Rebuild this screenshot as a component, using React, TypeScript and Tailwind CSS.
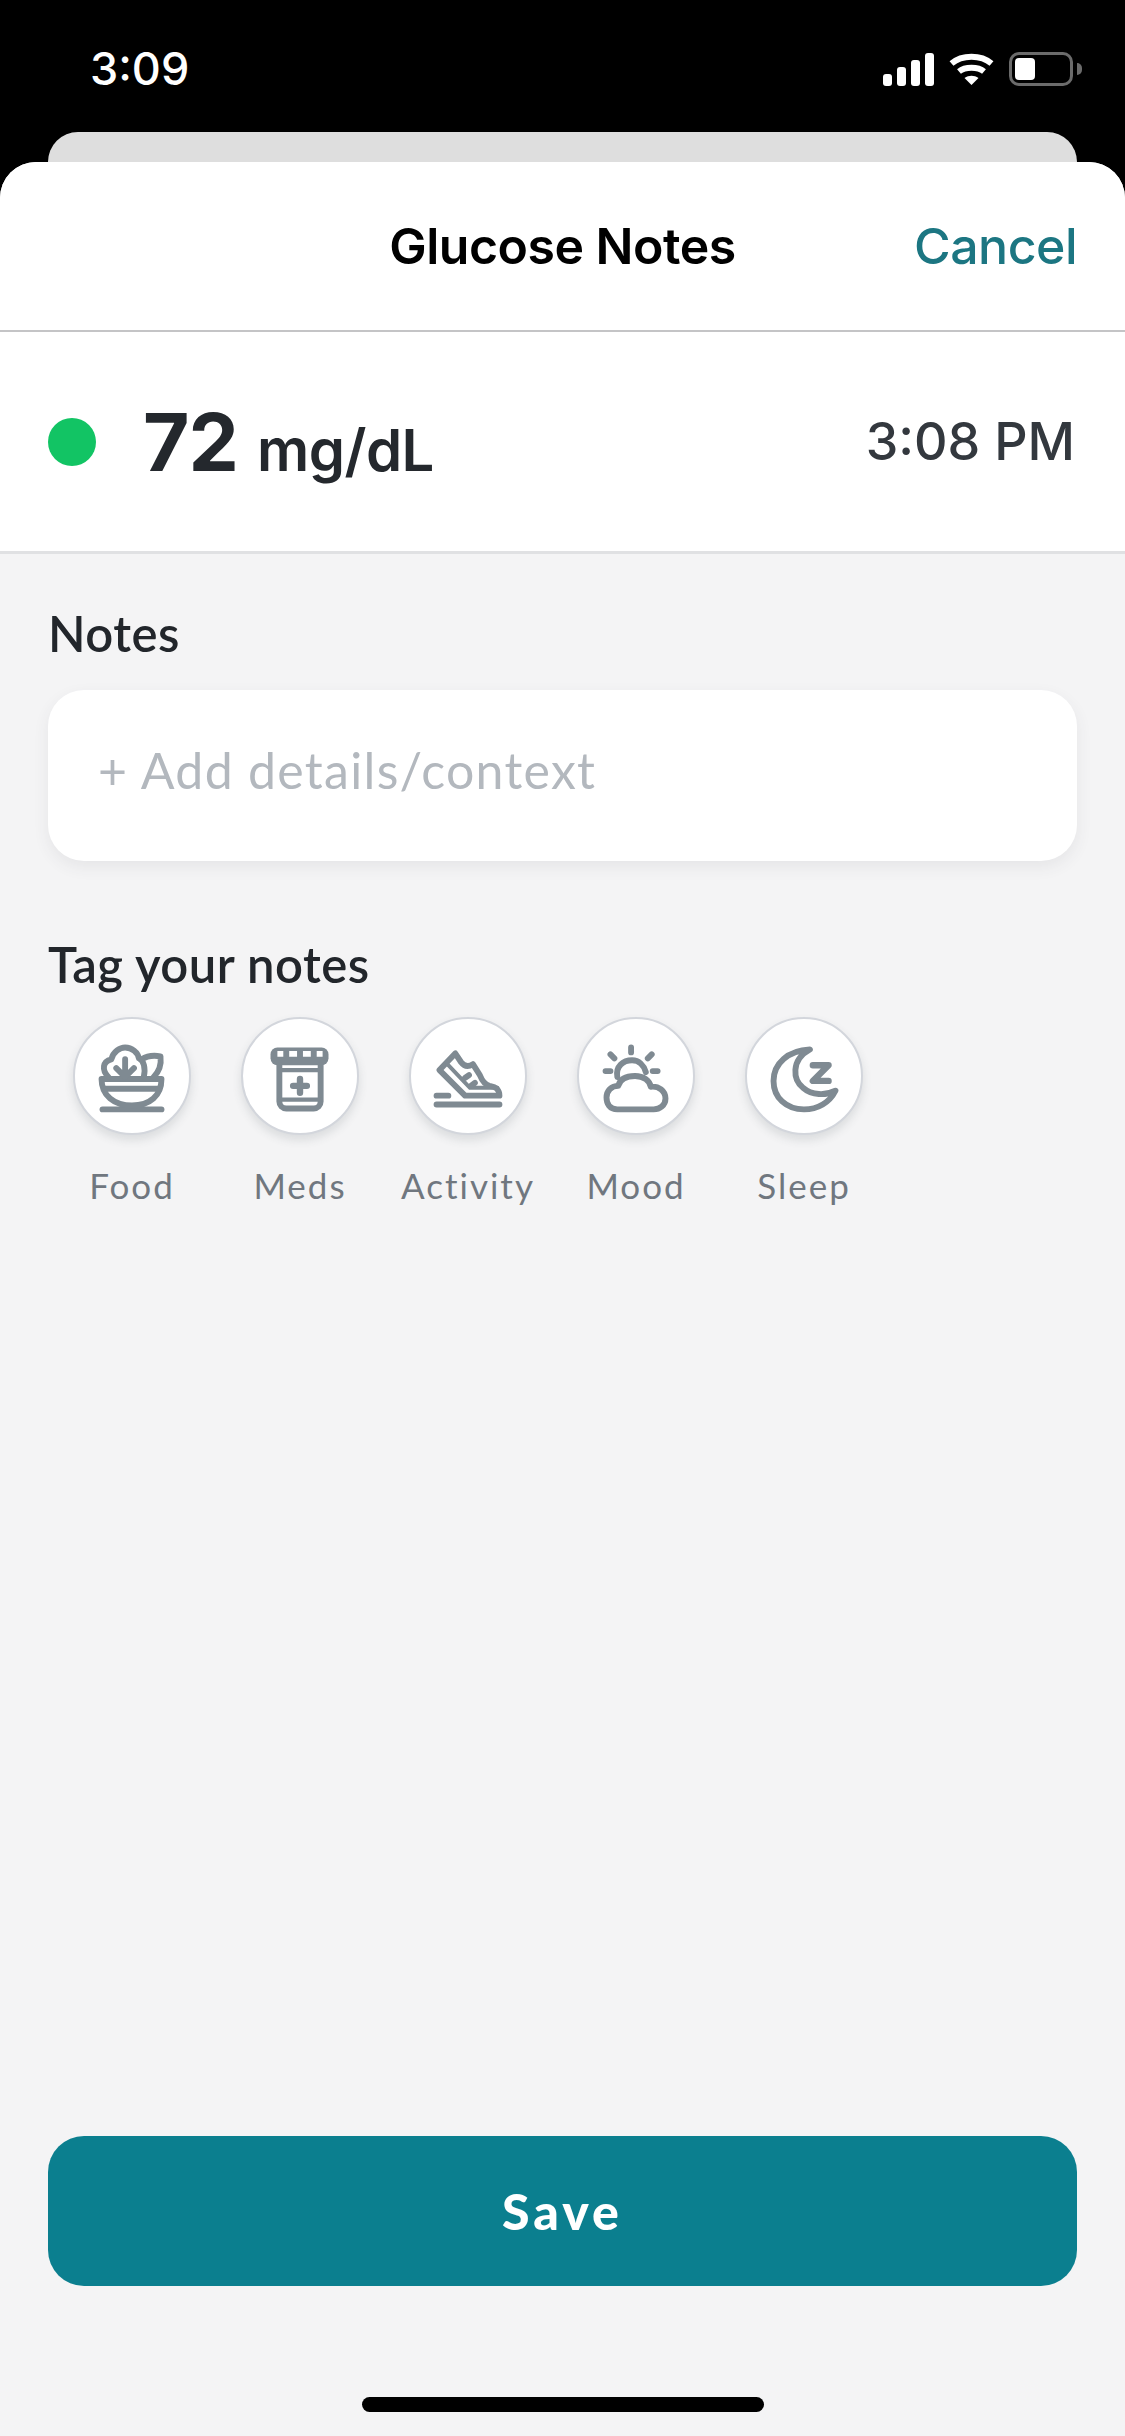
const iconStroke = "#7f8a92"

function FoodIcon() {
  return (
    <svg viewBox="0 0 116 116" className="w-full h-full" fill="none" stroke={iconStroke} strokeWidth="6" strokeLinecap="round" strokeLinejoin="round">
      <path d="M28 92 H88" />
      <path d="M27 61 H88 C88 78 76 88 58 88 C40 88 27 78 27 61Z" />
      <path d="M29 71 H86" strokeWidth="6" strokeLinecap="butt" />
      <path d="M34 59 C27 52 28 43 37 41 C39 33 46 29 51 29 C58 29 64 34 65 40 C70 42 72 50 70 59" />
      <path d="M51 41 V59 M42 50 L51 59 M60 50 L51 59" />
      <path d="M68 41 C74 37 81 37 87 38 C88 46 85 54 80 59" />
    </svg>
  )
}

function MedsIcon() {
  return (
    <svg viewBox="0 0 116 116" className="w-full h-full" fill="none" stroke={iconStroke} strokeWidth="6" strokeLinecap="round" strokeLinejoin="round">
      <rect x="28" y="29" width="59" height="18" rx="7" fill={iconStroke} stroke="none" />
      <path d="M35 35.500 H41 M47 35.500 H55 M61 35.500 H69 M75 35.500 H81" stroke="#fff" strokeWidth="6" strokeLinecap="butt" />
      <path d="M37 47 V84 C37 88 40 91 44 91 H72 C76 91 79 88 79 84 V47" />
      <path d="M37 52 H79 M37 82 H79" strokeWidth="4.500" />
      <path d="M51 68 H65 M58 61 V75" strokeWidth="6.500" />
    </svg>
  )
}

function ActivityIcon() {
  return (
    <svg viewBox="0 0 116 116" className="w-full h-full" fill="none" stroke={iconStroke} strokeWidth="6" strokeLinecap="round" strokeLinejoin="round">
      <path d="M45 35 L29 52 L55 78 H90 C90 71 86 69 80 68 C75 67 72 62 70 57 L63 46 C58 49 54 48 51 44 Z" />
      <path d="M37 46 L60 70 H88" strokeWidth="4" />
      <path d="M55 60 L59 57 M61 68 L65 65" />
      <path d="M26 87 H90 M26 78 H38" />
    </svg>
  )
}

function MoodIcon() {
  return (
    <svg viewBox="0 0 116 116" className="w-full h-full" fill="none" stroke={iconStroke} strokeWidth="6" strokeLinecap="round" strokeLinejoin="round">
      <path d="M39 92 C31 92 28 86 28 80 C28 73 33 68 40 68 C42 60 49 58 57 58 C66 58 72 63 73 69 C81 68 88 73 88 81 C88 88 82 92 76 92 Z" />
      <path d="M39 59 C37 48 45 42 54 42 C61 42 66 47 68 54" />
      <path d="M53 29 V34 M32 36 L36 40 M74 36 L70 40 M27 53 H32 M75 53 H80" />
    </svg>
  )
}

function SleepIcon() {
  return (
    <svg viewBox="0 0 116 116" className="w-full h-full" fill="none" stroke={iconStroke} strokeWidth="6" strokeLinecap="round" strokeLinejoin="round">
      <path d="M64 31 C42 32 27 45 27 63 C27 80 40 92 58 92 C72 92 84 85 90 73 C80 78 66 78 57 70 C47 62 44 42 64 31Z" />
      <path d="M67 47 H83 L67 63 H83" strokeWidth="6.500" />
    </svg>
  )
}

const tags = [
  { label: "Food", icon: <FoodIcon /> },
  { label: "Meds", icon: <MedsIcon /> },
  { label: "Activity", icon: <ActivityIcon /> },
  { label: "Mood", icon: <MoodIcon /> },
  { label: "Sleep", icon: <SleepIcon /> },
]

function StatusIcons() {
  return (
    <div className="flex items-center gap-[15px]">
      {/* signal */}
      <svg width="51" height="33" viewBox="0 0 51 33" fill="#fff">
        <rect x="0" y="21" width="9" height="12" rx="3" />
        <rect x="14" y="14" width="9" height="19" rx="3" />
        <rect x="28" y="7" width="9" height="26" rx="3" />
        <rect x="42" y="0" width="9" height="33" rx="3" />
      </svg>
      {/* wifi */}
      <svg width="45" height="33" viewBox="0 0 45 33" fill="none" stroke="#fff" strokeWidth="6">
        <path d="M2.500 10.500 C13 1.500 32 1.500 42.500 10.500" />
        <path d="M10 18.500 C16 13.500 29 13.500 35 18.500" />
        <path d="M15.500 25 L22.500 32 L29.500 25 C25 22 20 22 15.500 25Z" fill="#fff" stroke="none" />
      </svg>
      {/* battery */}
      <div className="flex items-center gap-[4px]">
        <div className="w-[64px] h-[34px] rounded-[10px] border-[3px] border-[#6b6b6b] p-[3px]">
          <div className="w-[20px] h-full rounded-[4px] bg-white" />
        </div>
        <div className="w-[5px] h-[12px] rounded-r-full bg-[#6b6b6b]" />
      </div>
    </div>
  )
}

export default function App() {
  return (
    <div className="w-[1125px] h-[2436px] bg-black flex flex-col overflow-hidden font-['Inter',sans-serif]">
      {/* status bar */}
      <div className="h-[132px] shrink-0 flex items-start justify-between pt-[46px] pl-[90px] pr-[43px]">
        <span className="text-white text-[45px] leading-[46px] font-medium">3:09</span>
        <div className="pt-[6px]">
          <StatusIcons />
        </div>
      </div>

      {/* card behind the sheet */}
      <div className="h-[66px] shrink-0 mx-[48px] rounded-t-[30px] bg-[#dedede]" />

      {/* sheet */}
      <div className="relative -mt-[36px] flex-1 flex flex-col rounded-t-[36px] overflow-hidden bg-[#f4f4f5]">
        <div className="h-[170px] shrink-0 bg-white border-b-2 border-[#c4c4c6] flex items-center justify-end relative pr-[48px]">
          <h1 className="absolute inset-x-0 text-center text-[50px] font-semibold text-black tracking-[-0.5px]">Glucose Notes</h1>
          <span className="relative text-[50px] font-medium text-[#1c7682] tracking-[-0.5px]">Cancel</span>
        </div>

        {/* reading */}
        <div className="h-[222px] shrink-0 bg-white border-b-[3px] border-[#e0e1e3] flex items-center justify-between pl-[48px] pr-[50px]">
          <div className="flex items-center">
            <div className="w-[48px] h-[48px] rounded-full bg-[#12c464]" />
            <div className="ml-[47px] flex items-baseline gap-[19px] text-[#24282d]">
              <span className="text-[80px] font-bold tracking-[-1px]">72</span>
              <span className="text-[58px] font-semibold tracking-[-0.5px]">mg/dL</span>
            </div>
          </div>
          <span className="text-[52px] font-medium text-[#33383e]">3:08 PM</span>
        </div>

        {/* notes */}
        <div className="flex-1 flex flex-col px-[48px] pt-[51px] font-['Lato',sans-serif]">
          <p className="text-[49px] leading-[56px] font-semibold text-[#22262b] tracking-[0.5px]">Notes</p>
          <div className="mt-[29px] h-[171px] rounded-[36px] bg-white shadow-[0_6px_16px_rgba(60,70,80,0.08)] flex items-center px-[50px] pb-[10px]">
            <span className="text-[50px] text-[#b3b8be] tracking-[1.3px]">+ Add details/context</span>
          </div>

          <p className="mt-[75px] text-[49px] leading-[56px] font-semibold text-[#22262b] tracking-[0.5px]">Tag your notes</p>
          <div className="mt-[25px] flex">
            {tags.map((tag) => (
              <div key={tag.label} className="w-[168px] flex flex-col items-center">
                <div className="w-[118px] h-[118px] rounded-full bg-white border-2 border-[#d3d6dc] shadow-[0_5px_10px_rgba(60,70,80,0.14)] overflow-hidden">
                  {tag.icon}
                </div>
                <span className="mt-[28px] text-[35px] leading-[44px] text-[#70777f] tracking-[2px]">{tag.label}</span>
              </div>
            ))}
          </div>

          <div className="mt-auto h-[150px] rounded-[36px] bg-[#0b7f8f] flex items-center justify-center">
            <span className="text-[50px] font-black text-white tracking-[4px]">Save</span>
          </div>
          <div className="h-[150px] shrink-0 flex items-end justify-center pb-[24px]">
            <div className="w-[402px] h-[15px] rounded-full bg-black" />
          </div>
        </div>
      </div>
    </div>
  )
}
